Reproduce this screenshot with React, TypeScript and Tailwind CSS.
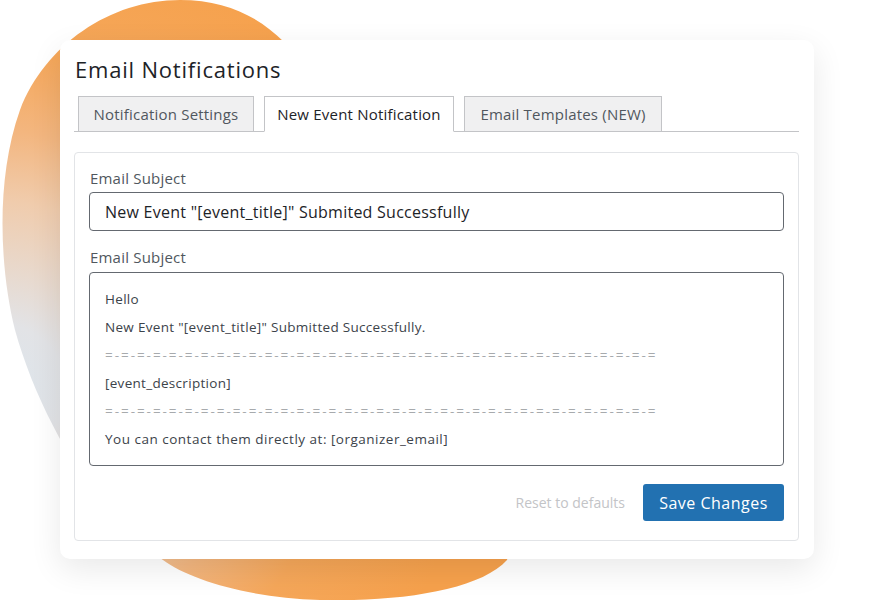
import React from "react";

const font = { fontFamily: '"Open Sans", "Noto Sans", sans-serif' };

const tabs = [
  { label: "Notification Settings", width: "w-[176px]", active: false },
  { label: "New Event Notification", width: "w-[190px]", active: true },
  { label: "Email Templates (NEW)", width: "w-[198px]", active: false },
];

const divider = "=-".repeat(34) + "=";

function Blob() {
  return (
    <svg className="absolute inset-0" width="875" height="600" viewBox="0 0 875 600">
      <defs>
        <radialGradient id="blobFill" gradientUnits="userSpaceOnUse" cx="0" cy="390" r="470">
          <stop offset="0" stopColor="#dce5ec" />
          <stop offset="0.14" stopColor="#e2e3e6" />
          <stop offset="0.4" stopColor="#f0ccad" />
          <stop offset="0.55" stopColor="#f3b67f" />
          <stop offset="0.72" stopColor="#f5a75a" />
          <stop offset="1" stopColor="#f6a14c" />
        </radialGradient>
      </defs>
      <path
        d="M 180 0 C 225 0 258 16 284 42 C 420 170 560 420 507 560 C 480 590 400 602 320 600 C 250 598 190 580 163 560 C 100 520 40 420 15 330 C 0 270 -5 180 20 110 C 45 45 110 0 180 0 Z"
        fill="url(#blobFill)"
      />
    </svg>
  );
}

export default function App() {
  return (
    <div className="relative h-[600px] w-[875px] overflow-hidden bg-white" style={font}>
      <Blob />
      <div className="relative ml-[60px] mt-[40px] w-[754px] rounded-[10px] bg-white pb-[18px] pl-[14px] pr-[15px] pt-[14px] shadow-[0_10px_32px_rgba(0,0,0,0.09)]">
        <h1 className="pl-px text-[22px] leading-[30px] font-normal tracking-[0.8px] text-[#1d2327]">Email Notifications</h1>
        <div className="mt-[12px] flex items-end border-b border-[#c3c4c7] pl-[4px]">
          {tabs.map((t, i) => (
            <div
              key={t.label}
              className={`${t.width} ${i > 0 ? "ml-[10px]" : ""} -mb-px flex h-[36px] items-center justify-center border text-[15px] tracking-[0.2px] ${
                t.active
                  ? "border-[#c3c4c7] border-b-white bg-white text-[#1d2327]"
                  : "border-[#c3c4c7] bg-[#f0f0f1] text-[#50575e]"
              }`}
            >
              {t.label}
            </div>
          ))}
        </div>

        <div className="mt-[20px] rounded-[4px] border border-[#e2e4e7] px-[14px] pb-[19px] pt-[15px]">
          <label className="mb-[4px] block pl-px text-[15px] leading-[20px] tracking-[0.2px] text-[#50575e]">Email Subject</label>
          <div className="flex h-[39px] items-center rounded-[4px] border border-[#646970] pl-[15px] text-[16px] tracking-[0.25px] text-[#1d2327]">
            New Event "[event_title]" Submited Successfully
          </div>

          <label className="mb-[5px] mt-[16px] block pl-px text-[15px] leading-[20px] tracking-[0.2px] text-[#50575e]">Email Subject</label>
          <div className="rounded-[4px] border border-[#646970] py-[12px] pl-[15px] text-[13.5px] leading-[28px] tracking-[0.3px] text-[#3c434a]">
            <p>Hello</p>
            <p>New Event "[event_title]" Submitted Successfully.</p>
            <p className="tracking-[1.95px] text-[#a7aaad]">{divider}</p>
            <p>[event_description]</p>
            <p className="tracking-[1.95px] text-[#a7aaad]">{divider}</p>
            <p className="tracking-[0.5px]">You can contact them directly at: [organizer_email]</p>
          </div>

          <div className="mt-[18px] flex items-center justify-end">
            <span className="mr-[18px] text-[14px] text-[#c3c4c7]">Reset to defaults</span>
            <button className="h-[37px] w-[141px] rounded-[3px] bg-[#2271b1] text-[16px] tracking-[0.5px] text-white">Save Changes</button>
          </div>
        </div>
      </div>
    </div>
  );
}
